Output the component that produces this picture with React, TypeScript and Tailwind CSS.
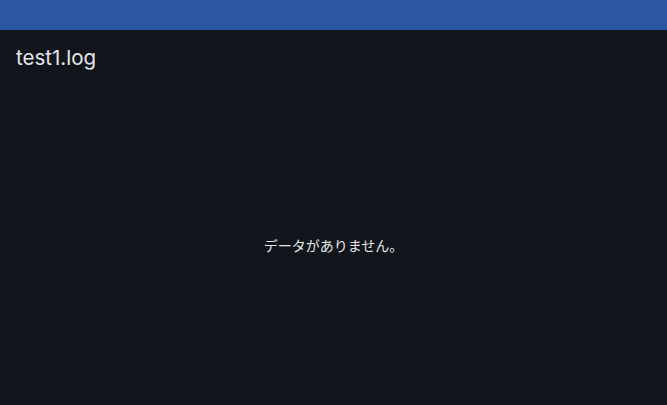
export default function App() {
  return (
    <div
      className="w-[667px] h-[405px] flex flex-col bg-[#12151b] text-[#e6e7e9]"
      style={{ fontFamily: 'Inter, "Noto Sans CJK JP", sans-serif' }}
    >
      <div className="h-[30px] bg-[#2a56a3] shrink-0" />
      <div className="h-[56px] shrink-0 flex items-center px-4">
        <h1 className="text-[20.5px] leading-none font-normal">test1.log</h1>
      </div>
      <div className="flex-1 flex items-center justify-center">
        <p className="text-[14px]">データがありません。</p>
      </div>
    </div>
  );
}
